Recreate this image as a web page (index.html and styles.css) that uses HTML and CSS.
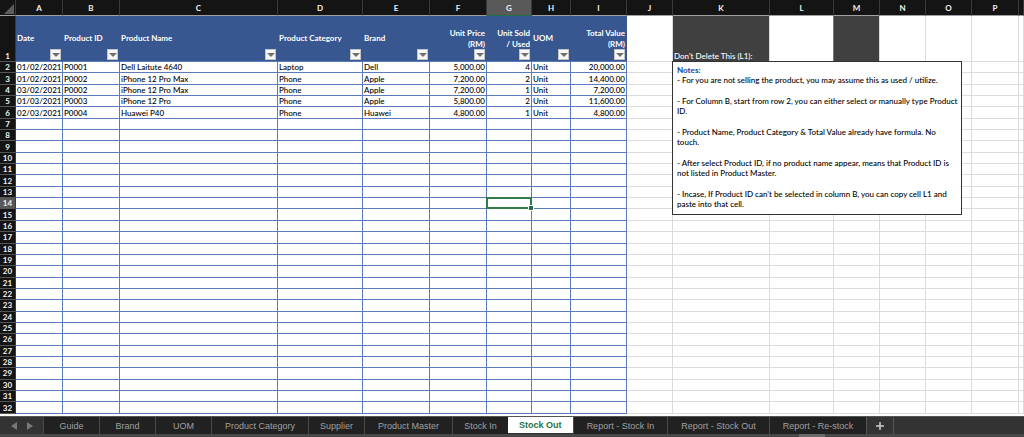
FILE: index.html
```html
<!DOCTYPE html>
<html lang="en">
<head>
    <meta charset="UTF-8">
    <meta name="viewport" content="width=device-width, initial-scale=1.0">
    <title>Stock Out</title>
    <link rel="stylesheet" href="styles.css">
</head>
<body>
    <main class="sheet">
        <table class="grid">
            <colgroup>
                <col class="w-num"><col class="w-a"><col class="w-b"><col class="w-c"><col class="w-d"><col class="w-e">
                <col class="w-f"><col class="w-g"><col class="w-h"><col class="w-i"><col class="w-j"><col class="w-k">
                <col class="w-l"><col class="w-m"><col class="w-n"><col class="w-o"><col class="w-p"><col>
            </colgroup>
            <thead>
                <tr class="letters">
                    <th class="corner"></th>
                    <th>A</th><th>B</th><th>C</th><th>D</th><th>E</th><th>F</th><th class="current">G</th><th>H</th>
                    <th>I</th><th>J</th><th>K</th><th>L</th><th>M</th><th>N</th><th>O</th><th>P</th><th></th>
                </tr>
            </thead>
            <tbody id="rows">
                <tr class="titles">
                    <th>1</th>
                    <td>Date<button class="filter" aria-label="Filter Date"></button></td>
                    <td>Product ID<button class="filter" aria-label="Filter Product ID"></button></td>
                    <td>Product Name<button class="filter" aria-label="Filter Product Name"></button></td>
                    <td>Product Category<button class="filter" aria-label="Filter Product Category"></button></td>
                    <td>Brand<button class="filter" aria-label="Filter Brand"></button></td>
                    <td>Unit Price<br>(RM)<button class="filter" aria-label="Filter Unit Price"></button></td>
                    <td>Unit Sold<br>/ Used<button class="filter" aria-label="Filter Unit Sold"></button></td>
                    <td>UOM<button class="filter" aria-label="Filter UOM"></button></td>
                    <td>Total Value<br>(RM)<button class="filter" aria-label="Filter Total Value"></button></td>
                    <td></td>
                    <td class="dark">Don't Delete This (L1):</td>
                    <td class="list-cell"></td>
                    <td class="dark"></td>
                    <td></td><td></td><td></td><td></td>
                </tr>
                <tr>
                    <th>2</th>
                    <td>01/02/2021</td><td>P0001</td><td>Dell Laitute 4640</td><td>Laptop</td><td>Dell</td>
                    <td>5,000.00</td><td>4</td><td>Unit</td><td>20,000.00</td><td></td>
                    <td>
                        <div class="notes">
                            <h2>Notes:</h2>
                            <p>- For you are not selling the product, you may assume this as used / utilize.</p>
                            <p>- For Column B, start from row 2, you can either select or manually type Product ID.</p>
                            <p>- Product Name, Product Category &amp; Total Value already have formula. No touch.</p>
                            <p>- After select Product ID, if no product name appear, means that Product ID is not listed in Product Master.</p>
                            <p>- Incase, If Product ID can't be selected in column B, you can copy cell L1 and paste into that cell.</p>
                        </div>
                    </td>
                    <td></td><td></td><td></td><td></td><td></td><td></td>
                </tr>
                <tr>
                    <th>3</th>
                    <td>01/02/2021</td><td>P0002</td><td>iPhone 12 Pro Max</td><td>Phone</td><td>Apple</td>
                    <td>7,200.00</td><td>2</td><td>Unit</td><td>14,400.00</td>
                    <td></td><td></td><td></td><td></td><td></td><td></td><td></td><td></td>
                </tr>
                <tr>
                    <th>4</th>
                    <td>03/02/2021</td><td>P0002</td><td>iPhone 12 Pro Max</td><td>Phone</td><td>Apple</td>
                    <td>7,200.00</td><td>1</td><td>Unit</td><td>7,200.00</td>
                    <td></td><td></td><td></td><td></td><td></td><td></td><td></td><td></td>
                </tr>
                <tr>
                    <th>5</th>
                    <td>01/03/2021</td><td>P0003</td><td>iPhone 12 Pro</td><td>Phone</td><td>Apple</td>
                    <td>5,800.00</td><td>2</td><td>Unit</td><td>11,600.00</td>
                    <td></td><td></td><td></td><td></td><td></td><td></td><td></td><td></td>
                </tr>
                <tr>
                    <th>6</th>
                    <td>02/03/2021</td><td>P0004</td><td>Huawei P40</td><td>Phone</td><td>Huawei</td>
                    <td>4,800.00</td><td>1</td><td>Unit</td><td>4,800.00</td>
                    <td></td><td></td><td></td><td></td><td></td><td></td><td></td><td></td>
                </tr>
            </tbody>
        </table>
    </main>

    <nav class="tabs">
        <div class="arrows">
            <button aria-label="Previous sheet"><svg width="6" height="8" viewBox="0 0 6 8"><path d="M6 0v8L0 4z"/></svg></button>
            <button aria-label="Next sheet"><svg width="6" height="8" viewBox="0 0 6 8"><path d="M0 0v8l6-4z"/></svg></button>
        </div>
        <button class="tab">Guide</button>
        <button class="tab">Brand</button>
        <button class="tab">UOM</button>
        <button class="tab wide">Product Category</button>
        <button class="tab">Supplier</button>
        <button class="tab wide">Product Master</button>
        <button class="tab">Stock In</button>
        <button class="tab active">Stock Out</button>
        <button class="tab wide">Report - Stock In</button>
        <button class="tab wide">Report - Stock Out</button>
        <button class="tab wide">Report - Re-stock</button>
        <button class="add" aria-label="Add sheet"><svg width="8" height="8" viewBox="0 0 8 8"><path d="M4 0v8M0 4h8"/></svg></button>
    </nav>
    <footer class="status"><span class="handle"></span></footer>

    <script>
        // empty rows under the data
        const rows = document.getElementById("rows");

        for (let n = 7; n <= 32; n++) {
            const tr = document.createElement("tr");
            tr.innerHTML = "<th>" + n + "</th>" + "<td></td>".repeat(17);
            rows.appendChild(tr);

            if (n === 14) {
                tr.cells[0].classList.add("current");
                tr.cells[7].classList.add("selected");
            }
        }
    </script>
</body>
</html>
```

FILE: styles.css
```css
* {
    margin: 0;
    padding: 0;
    box-sizing: border-box;
}

body {
    font-family: Lato, sans-serif;
    font-size: 8px;
    font-weight: 500;
    line-height: 10px;
    color: black;
    background: white;
    display: flex;
    flex-direction: column;
    height: 100vh;
    overflow: hidden;
}

button {
    border: none;
    background: none;
    font: inherit;
    color: inherit;
}

.sheet {
    flex: 1;
    min-height: 0;
    overflow: hidden;
}

.grid {
    width: 100%;
    height: calc(100vh - 23px);
    table-layout: fixed;
    border-collapse: separate;
    border-spacing: 0;
}

.w-num { width: 16px; }
.w-a { width: 47px; }
.w-b { width: 57px; }
.w-c { width: 158px; }
.w-d { width: 85px; }
.w-e { width: 67px; }
.w-f { width: 57px; }
.w-g { width: 45px; }
.w-h { width: 39px; }
.w-i { width: 56px; }
.w-j { width: 46px; }
.w-k { width: 97px; }
.w-l { width: 64px; }
.w-m, .w-n, .w-o { width: 46px; }
.w-p { width: 47px; }

.grid th {
    background: #141414;
    color: #f2f2f2;
    font-weight: bold;
    border-right: 1px solid #3a3a3a;
    border-bottom: 1px solid #555;
    position: relative;
}

.grid td {
    border-right: 1px solid #dcdcdc;
    border-bottom: 1px solid #dcdcdc;
    padding: 0 1px;
    white-space: nowrap;
    position: relative;
}

.grid td:nth-child(-n+10) {
    border-color: #5b7bbb;
}

.grid td:nth-child(7),
.grid td:nth-child(8),
.grid td:nth-child(10) {
    text-align: right;
}

/* column letters */
.grid .letters th {
    height: 16px;
    border-bottom-color: #a0a0a0;
}

.grid th.current {
    background: #595959;
}

.grid .letters th.current {
    border-bottom-color: #217346;
}

.corner::after {
    content: "";
    position: absolute;
    right: 1px;
    bottom: 1px;
    border-left: 10px solid transparent;
    border-bottom: 10px solid #5c5c5c;
}

/* row 1 */
.titles th,
.titles td {
    height: 46px;
    vertical-align: bottom;
}

.grid .titles td:nth-child(-n+10) {
    background: #38568f;
    border-right-color: #38568f;
    color: white;
    font-weight: bold;
    line-height: 11px;
    vertical-align: middle;
}

.grid .titles .dark {
    background: #404040;
    color: white;
}

.grid .titles .list-cell {
    border-right-color: #5b7bbb;
}

.filter {
    position: absolute;
    right: 1px;
    bottom: 1px;
    width: 11px;
    height: 11px;
    background: #f7f7f7;
    border: 1px solid #c4c4c4;
}

.filter::after {
    content: "";
    position: absolute;
    left: 1px;
    top: 3px;
    border: 4px solid transparent;
    border-top-color: #707070;
    border-bottom: none;
}

/* active cell */
.selected {
    z-index: 1;
}

.selected::before {
    content: "";
    position: absolute;
    inset: -1px;
    border: 2px solid #2f7d4a;
}

.selected::after {
    content: "";
    position: absolute;
    right: -2px;
    bottom: -2px;
    width: 4px;
    height: 4px;
    background: #217346;
    outline: 1px solid white;
}

.notes {
    position: absolute;
    top: -1px;
    left: -1px;
    z-index: 1;
    width: 290px;
    padding: 3px 2px 5px 4px;
    background: white;
    border: 1px solid #333;
    white-space: normal;
}

.notes h2 {
    font-size: 8px;
    font-weight: 900;
    color: #2450a8;
}

.notes p + p {
    margin-top: 11px;
}

/* sheet tabs */
.tabs {
    display: flex;
    align-items: flex-start;
    height: 18px;
    background: #333;
    border-top: 1px solid #555;
    font-family: "Liberation Sans", sans-serif;
    font-size: 9px;
    color: #a0a0a0;
}

.arrows {
    width: 43px;
    height: 17px;
    display: flex;
    justify-content: center;
    align-items: center;
    gap: 10px;
    fill: #777;
}

.arrows button,
.arrows svg {
    display: block;
}

.tab {
    min-width: 56px;
    height: 17px;
    padding: 0 11px;
    background: #212121;
    border-left: 1px solid #4a4a4a;
    white-space: nowrap;
}

.tab.wide {
    padding: 0 13px;
}

.tab.active {
    height: 16px;
    background: white;
    border-left: none;
    color: #217346;
    font-weight: bold;
}

.add {
    width: 28px;
    height: 17px;
    border-left: 1px solid #555;
    border-right: 1px solid #555;
    stroke: #ccc;
    stroke-width: 1.5;
}

.add svg {
    display: block;
    margin: 0 auto;
}

.status {
    display: flex;
    height: 3px;
    background: #484848;
    padding-left: 78%;
}

.handle {
    width: 26px;
    background: #6a6a6a;
}
```
